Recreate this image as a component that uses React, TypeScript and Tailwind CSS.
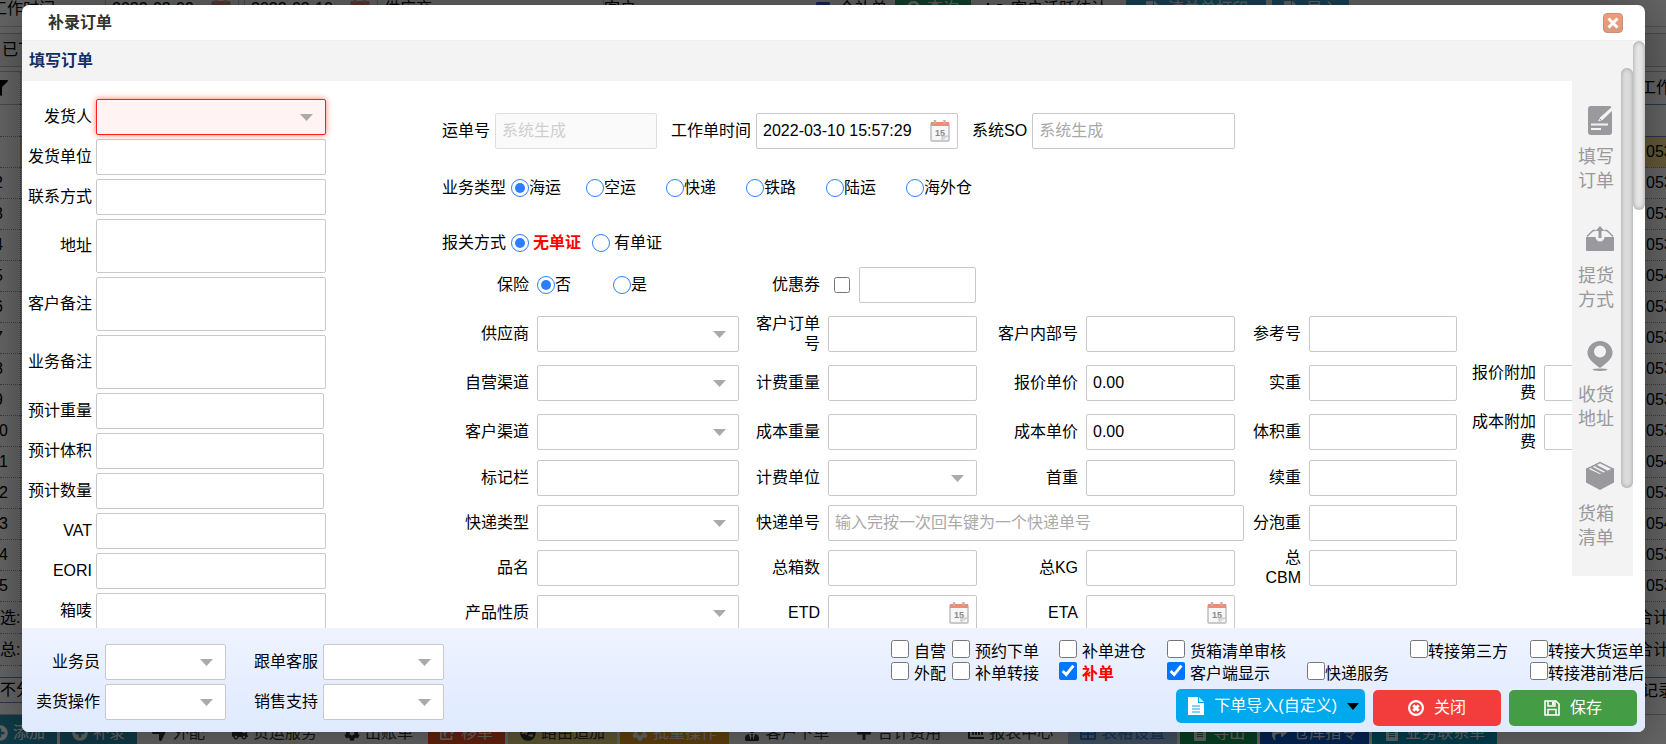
import { useId } from "react";
import type { ReactNode } from "react";
import {
  FaPlusCircle, FaLocationArrow, FaTruck, FaCog, FaShareSquare, FaGlobeAsia, FaUserTie, FaPlus,
  FaChartBar, FaTable, FaFileAlt, FaShare, FaFilter, FaSearch, FaCheckSquare, FaChartLine,
} from "react-icons/fa";

const frame = "w-full rounded-[2px] border px-[6px] text-base text-black outline-none placeholder:text-[#a9a9a9] ";
const box = frame + "border-[#c9c9c9] bg-white ";

function Calendar() {
  return (
    <svg viewBox="0 0 20 22" className="pointer-events-none absolute right-2 top-[7px] h-[22px] w-5" aria-hidden="true">
      <rect x="1" y="3" width="18" height="18" rx="1" fill="#f7f7f7" stroke="#b9b9b9" strokeWidth="1.4" />
      <rect x="1" y="2" width="18" height="4" fill="#f08a70" />
      <path d="M5 0v4M14.5 0v4" stroke="#b5b5b5" strokeWidth="2.4" />
      <text x="5" y="15.5" fontSize="9" fontWeight="700" fill="#8a8a8a" fontFamily="Liberation Sans, sans-serif">15</text>
      <path d="M12 21v-5h7" fill="#ddd" stroke="#c4c4c4" />
    </svg>
  );
}

function SelectBox({ id, invalid }: { id: string; invalid?: boolean }) {
  return (
    <div className="relative h-9 w-full">
      <select
        id={id}
        aria-invalid={invalid}
        className={(invalid ? frame + "border-[#ff1f1f] bg-[#fff3f3] shadow-[0_0_6px_#ff7a60] " : box) + "h-9 appearance-none"}
      >
        <option value=""></option>
      </select>
      <svg viewBox="0 0 13 7" className="pointer-events-none absolute right-[13px] top-[15px] h-[7px] w-[13px]" aria-hidden="true">
        <path d="M0 0h13L6.500 7z" fill="#aaa" />
      </svg>
    </div>
  );
}

type Kind = "text" | "select" | "date" | "area";

function Control({ id, kind, value, placeholder }: { id: string; kind: Kind; value?: string; placeholder?: string }) {
  if (kind === "select") return <SelectBox id={id} />;
  if (kind === "area") return <textarea id={id} className={box + "block h-[54px] resize-none"} />;
  if (kind === "date")
    return (
      <div className="relative h-9 w-full">
        <input id={id} type="text" defaultValue={value} className={box + "h-9"} />
        <Calendar />
      </div>
    );
  return <input id={id} type="text" defaultValue={value} placeholder={placeholder} className={box + "h-9"} />;
}

function SideField({ label, kind = "text", narrow, invalid }: { label: string; kind?: Kind; narrow?: boolean; invalid?: boolean }) {
  const id = useId();
  return (
    <div className="flex items-center gap-1">
      <label htmlFor={id} className="w-[70px] text-right">{label}</label>
      <div className={narrow ? "w-[228px]" : "w-[230px]"}>
        {invalid ? <SelectBox id={id} invalid /> : <Control id={id} kind={kind} />}
      </div>
    </div>
  );
}

function Cell({ label, kind = "text", value, placeholder, wide }: { label: string; kind?: Kind; value?: string; placeholder?: string; wide?: boolean }) {
  const id = useId();
  return (
    <>
      <label htmlFor={id} className="pl-[15px] text-right leading-5">{label}</label>
      <div className={wide ? "col-span-3 -mr-[9px] pl-2" : "pl-2"}>
        <Control id={id} kind={kind} value={value} placeholder={placeholder} />
      </div>
    </>
  );
}

function Radio({ name, label, checked, className = "", gap = "", strong }: { name: string; label: string; checked?: boolean; className?: string; gap?: string; strong?: boolean }) {
  return (
    <label className={"flex items-center " + gap + " " + className}>
      <input
        type="radio"
        name={name}
        defaultChecked={checked}
        className="grid size-[18px] shrink-0 appearance-none place-items-center rounded-full border border-[#2b7fff] bg-white before:size-[10px] before:rounded-full before:content-[''] checked:before:bg-[#2b7fff]"
      />
      <span className={strong ? "font-bold text-[#ff0000]" : ""}>{label}</span>
    </label>
  );
}

function Check({ label, checked, tight, strong }: { label: string; checked?: boolean; tight?: boolean; strong?: boolean }) {
  return (
    <label className={"flex h-[22px] items-start whitespace-nowrap " + (tight ? "" : "gap-[5px]")}>
      <input type="checkbox" defaultChecked={checked} className="size-[18px] shrink-0" />
      <span className={"leading-6 " + (strong ? "font-bold text-[#ff0000]" : "")}>{label}</span>
    </label>
  );
}

const grid = "grid auto-rows-[36px] grid-cols-[87px_210px_81px_157px_101px_157px_66px_156px_79px_157px] items-center ";

function OrderForm() {
  const no = useId();
  const time = useId();
  const so = useId();
  const coupon = useId();
  return (
    <div className="shrink-0">
      <div className="mt-8 flex h-9 items-center">
        <label htmlFor={no} className="mr-[5px]">运单号</label>
        <input id={no} disabled placeholder="系统生成" className="h-9 w-[162px] rounded-[2px] border border-[#dedede] bg-[#fafafa] px-[6px] placeholder:text-[#cfcfcf]" />
        <label htmlFor={time} className="ml-[14px] mr-[5px]">工作单时间</label>
        <div className="w-[202px]"><Control id={time} kind="date" value="2022-03-10 15:57:29" /></div>
        <label htmlFor={so} className="ml-[14px] mr-[5px]">系统SO</label>
        <div className="w-[203px]"><Control id={so} kind="text" placeholder="系统生成" /></div>
      </div>
      <div className="mt-[27px] flex h-6 items-center">
        <span className="mr-[5px]">业务类型</span>
        <Radio name="biz" label="海运" checked className="w-[75px]" />
        <Radio name="biz" label="空运" className="w-20" />
        <Radio name="biz" label="快递" className="w-20" />
        <Radio name="biz" label="铁路" className="w-20" />
        <Radio name="biz" label="陆运" className="w-20" />
        <Radio name="biz" label="海外仓" />
      </div>
      <div className="mt-[31px] flex h-6 items-center">
        <span className="mr-[5px]">报关方式</span>
        <Radio name="customs" label="无单证" checked strong gap="gap-1" className="w-[81px]" />
        <Radio name="customs" label="有单证" gap="gap-1" />
      </div>
      <div className={grid + "mt-3 gap-y-[13px]"}>
        <span className="text-right">保险</span>
        <div className="flex pl-2">
          <Radio name="ins" label="否" checked className="w-[76px]" />
          <Radio name="ins" label="是" />
        </div>
        <label htmlFor={coupon} className="text-right">优惠券</label>
        <div className="col-span-7 flex items-center gap-[9px] pl-[14px]">
          <input id={coupon} type="checkbox" className="size-4" />
          <input aria-label="优惠券" className="h-9 w-[117px] rounded-[2px] border border-[#c9c9c9] px-[6px]" />
        </div>

        <Cell label="供应商" kind="select" />
        <Cell label="客户订单号" />
        <Cell label="客户内部号" />
        <Cell label="参考号" />
        <span className="col-span-2" />

        <Cell label="自营渠道" kind="select" />
        <Cell label="计费重量" />
        <Cell label="报价单价" value="0.00" />
        <Cell label="实重" />
        <Cell label="报价附加费" />

        <Cell label="客户渠道" kind="select" />
        <Cell label="成本重量" />
        <Cell label="成本单价" value="0.00" />
        <Cell label="体积重" />
        <Cell label="成本附加费" />
      </div>
      <div className={grid + "mt-[10px] gap-y-[9px]"}>
        <Cell label="标记栏" />
        <Cell label="计费单位" kind="select" />
        <Cell label="首重" />
        <Cell label="续重" />
        <span className="col-span-2" />

        <Cell label="快递类型" kind="select" />
        <Cell label="快递单号" placeholder="输入完按一次回车键为一个快递单号" wide />
        <Cell label="分泡重" />
        <span className="col-span-2" />

        <Cell label="品名" />
        <Cell label="总箱数" />
        <Cell label="总KG" />
        <Cell label="总CBM" />
        <span className="col-span-2" />

        <Cell label="产品性质" kind="select" />
        <Cell label="ETD" kind="date" />
        <Cell label="ETA" kind="date" />
      </div>
    </div>
  );
}

function EditIcon() {
  return (
    <svg viewBox="0 0 28 30" className="h-[30px] w-7" aria-hidden="true">
      <rect x="2" y="1" width="24" height="29" rx="3" fill="#9a9a9e" />
      <path d="M28 0 L14 12.500 L12 16.500 L16.500 15 L28 4z" fill="#f3f3f3" />
      <path d="M13.500 13.500l1.800 1.800" stroke="#9a9a9e" strokeWidth="1" />
      <path d="M5 19.500h17M5 24h10" stroke="#f3f3f3" strokeWidth="2" />
    </svg>
  );
}
function UploadIcon() {
  return (
    <svg viewBox="0 0 28 30" className="h-[30px] w-7" aria-hidden="true">
      <path d="M0 13h9.500a4.500 4.500 0 0 0 9 0H28v13a1 1 0 0 1-1 1H1a1 1 0 0 1-1-1z" fill="#9a9a9e" />
      <path d="M1 12.500l6-6h2.500M27 12.500l-6-6h-2.500" fill="none" stroke="#9a9a9e" strokeWidth="1.400" />
      <path d="M14 2l4.500 5h-3v7h-3V7h-3z" fill="#9a9a9e" />
    </svg>
  );
}
function PinIcon() {
  return (
    <svg viewBox="0 2 28 30" className="h-[30px] w-7 overflow-visible" aria-hidden="true">
      <path fillRule="evenodd" d="M14 0a12.500 12 0 0 1 12.500 12c0 6-7 11-12.500 15C8.500 23 1.500 18 1.500 12A12.500 12 0 0 1 14 0zm0 4.500a6 6 0 1 0 0 12 6 6 0 0 0 0-12z" fill="#9a9a9e" />
      <ellipse cx="14" cy="28.700" rx="7.500" ry="1.200" fill="#9a9a9e" />
    </svg>
  );
}
function BoxIcon() {
  return (
    <svg viewBox="0 2 28 30" className="h-[30px] w-7 overflow-visible" aria-hidden="true">
      <path d="M0 8.500l14 6.500 14-6.500V22.500L14 30 0 22.500z" fill="#9a9a9e" />
      <path d="M1 9L14 2.500 27 9 14 15z" fill="#f3f3f3" stroke="#9a9a9e" strokeWidth="1.400" />
      <path d="M9.500 5.500l11.500 6M5.500 7.500l11.500 6" stroke="#9a9a9e" strokeWidth="2" />
    </svg>
  );
}

function StepItem({ icon, first, second }: { icon: ReactNode; first: string; second: string }) {
  return (
    <a href="#" className="flex w-9 flex-col items-end text-lg leading-6 text-[#999]">
      {icon}
      <span className="mt-[10px]">{first}</span>
      <span>{second}</span>
    </a>
  );
}

function FooterSelect({ label }: { label: string }) {
  const id = useId();
  return (
    <>
      <label htmlFor={id} className="text-right">{label}</label>
      <SelectBox id={id} />
    </>
  );
}

function Footer() {
  return (
    <div className="flex h-[104px] shrink-0 justify-between overflow-hidden bg-linear-to-b from-[#eef3ff] to-[#dfeafe]">
      <div className="grid auto-rows-[36px] grid-cols-[64px_121px_87px_121px] content-start items-center gap-x-[5px] gap-y-1 pl-[14px] pt-4">
        <FooterSelect label="业务员" />
        <FooterSelect label="跟单客服" />
        <FooterSelect label="卖货操作" />
        <FooterSelect label="销售支持" />
      </div>
      <div className="flex flex-col items-end pt-3">
        <div className="grid grid-cols-[61px_107px_108px_140px_103px_120px_115px]">
          <Check label="自营" />
          <Check label="预约下单" />
          <Check label="补单进仓" />
          <Check label="货箱清单审核" />
          <span />
          <Check label="转接第三方" tight />
          <Check label="转接大货运单" tight />
          <Check label="外配" />
          <Check label="补单转接" />
          <Check label="补单" checked strong />
          <Check label="客户端显示" checked />
          <Check label="快递服务" tight />
          <span />
          <Check label="转接港前港后" tight />
        </div>
        <div className="mt-[5px] flex gap-2 pr-2 text-white">
          <button className="flex h-[34px] items-center gap-[10px] rounded-[5px] bg-[#00a9ee] pl-3 pr-[6px]">
            <svg viewBox="0 0 16 18" className="h-[18px] w-4" aria-hidden="true">
              <path d="M0 0h10v6h6v12H0z" fill="#fff" />
              <path d="M11 0l5 5h-5z" fill="#cdeffd" />
              <path d="M4 9h8M4 12h8M4 15h8" stroke="#00a9ee" strokeWidth="1.200" />
            </svg>
            <span>下单导入(自定义)</span>
            <svg viewBox="0 0 12 7" className="h-[7px] w-3" aria-hidden="true"><path d="M0 0h12L6 7z" fill="#000" /></svg>
          </button>
          <button className="mt-px flex h-9 w-32 items-center justify-center gap-[10px] rounded-[5px] bg-[#f33d3d]">
            <svg viewBox="0 0 16 16" className="size-4" aria-hidden="true">
              <circle cx="8" cy="8" r="6.900" fill="none" stroke="#fff" strokeWidth="2.200" />
              <path d="M5.300 5.300l5.400 5.400M10.700 5.300l-5.400 5.400" stroke="#fff" strokeWidth="3" />
            </svg>
            <span>关闭</span>
          </button>
          <button className="mt-px flex h-9 w-32 items-center justify-center gap-[10px] rounded-[5px] bg-[#449c45]">
            <svg viewBox="0 0 16 16" className="size-4" aria-hidden="true">
              <path d="M1 1h11l3 3v11H1z" fill="none" stroke="#fff" strokeWidth="1.600" />
              <path d="M4 1v5h7V1M4 15V9.500h8V15" fill="none" stroke="#fff" strokeWidth="1.500" />
              <rect x="8" y="2" width="2" height="3" fill="#fff" />
            </svg>
            <span>保存</span>
          </button>
        </div>
      </div>
    </div>
  );
}

function Dialog() {
  return (
    <section role="dialog" aria-label="补录订单" className="relative flex min-w-0 flex-1 flex-col overflow-hidden rounded-[7px] bg-white">
      <header className="flex h-[36px] shrink-0 items-center justify-between border-b border-[#eee] pl-[26px] pr-[22px]">
        <h1 className="font-bold text-[#333]">补录订单</h1>
        <button aria-label="关闭窗口" className="flex size-5 items-center justify-center rounded-[4px] border border-[#cb8d76] bg-linear-to-b from-[#f59a78] to-[#d99a7c]">
          <svg viewBox="0 0 12 12" className="size-3 shrink-0" aria-hidden="true"><path d="M1.500 1.500l9 9M10.500 1.500l-9 9" stroke="#fff" strokeWidth="3" /></svg>
        </button>
      </header>
      <div className="flex min-h-0 flex-1">
        <div className="flex min-w-0 flex-1 flex-col">
          <h2 className="flex h-10 shrink-0 items-center bg-[#f3f3f3] pl-[7px] font-bold text-[#122e69]">填写订单</h2>
          <div className="flex min-h-0 flex-1">
            <form className="flex min-w-0 flex-1 overflow-hidden">
              <div className="mt-[18px] flex shrink-0 flex-col gap-1">
                <SideField label="发货人" invalid />
                <SideField label="发货单位" />
                <SideField label="联系方式" />
                <SideField label="地址" kind="area" />
                <SideField label="客户备注" kind="area" />
                <SideField label="业务备注" kind="area" />
                <SideField label="预计重量" narrow />
                <SideField label="预计体积" narrow />
                <SideField label="预计数量" narrow />
                <SideField label="VAT" />
                <SideField label="EORI" />
                <SideField label="箱唛" />
              </div>
              <div className="ml-[116px]"><OrderForm /></div>
            </form>
            <nav className="flex w-[61px] shrink-0 flex-col gap-[31px] self-start bg-[#f3f3f3] pb-[26px] pl-[6px] pt-6">
              <StepItem icon={<EditIcon />} first="填写" second="订单" />
              <StepItem icon={<UploadIcon />} first="提货" second="方式" />
              <StepItem icon={<PinIcon />} first="收货" second="地址" />
              <StepItem icon={<BoxIcon />} first="货箱" second="清单" />
            </nav>
          </div>
        </div>
        <div className="w-3 shrink-0 bg-white">
          <div className="h-[169px] rounded-full bg-[#e6e6e6] shadow-[inset_0_0_5px_#999]" />
        </div>
      </div>
      <div className="absolute right-3 top-[63px] h-[420px] w-3 rounded-full bg-[#dcdcdc] shadow-[inset_0_0_4px_#999]" />
      <Footer />
    </section>
  );
}

const tail = ["053", "053", "053", "053", "054", "053", "053", "053", "053", "053", "054", "053", "054", "053", "053"];

const actions: { text: string; icon: ReactNode; tone: string }[] = [
  { text: "添加", icon: <FaPlusCircle />, tone: "bg-[#2793b4] text-white" },
  { text: "补录", icon: <FaPlusCircle />, tone: "bg-[#2793b4] text-white" },
  { text: "外配", icon: <FaLocationArrow />, tone: "text-[#333]" },
  { text: "货运服务", icon: <FaTruck />, tone: "text-[#333]" },
  { text: "出账单", icon: <FaCog />, tone: "text-[#333]" },
  { text: "移单", icon: <FaShareSquare />, tone: "bg-[#ff5722] text-white" },
  { text: "路由追加", icon: <FaGlobeAsia />, tone: "bg-[#f0dc82] text-[#333]" },
  { text: "批量操作", icon: <FaCog />, tone: "bg-[#f5a623] text-white" },
  { text: "客户下单", icon: <FaUserTie />, tone: "text-[#333]" },
  { text: "合计费用", icon: <FaPlus />, tone: "text-[#333]" },
  { text: "报表中心", icon: <FaChartBar />, tone: "text-[#333]" },
  { text: "表格设置", icon: <FaTable />, tone: "bg-[#a9ccf5] text-[#2f7fe0]" },
  { text: "导出", icon: <FaFileAlt />, tone: "bg-[#15a05a] text-white" },
  { text: "仓库指令", icon: <FaShare />, tone: "bg-[#0a5fd8] text-white" },
  { text: "业务联系单", icon: <FaFileAlt />, tone: "bg-[#009fc8] text-white" },
];

function TopDate({ label, value }: { label: string; value: string }) {
  return (
    <div className="relative -mt-2 h-[34px] w-[134px] shrink-0">
      <input aria-label={label} defaultValue={value} className={box + "h-[34px]"} />
      <Calendar />
    </div>
  );
}

function Backdrop() {
  return (
    <div className="flex h-full flex-col overflow-hidden bg-white whitespace-nowrap">
      <div className="flex h-[27px] shrink-0 items-start border-b border-[#ccc] leading-[18px]">
        <span className="-ml-[9px] w-[114px] shrink-0">工作时间</span>
        <TopDate label="开始时间" value="2022-02-09" />
        <span className="w-[5px] shrink-0" />
        <TopDate label="结束时间" value="2022-03-10" />
        <span className="w-[226px] shrink-0 border-r border-[#ccc] pl-[6px]">供应商</span>
        <span className="w-[211px] shrink-0">客户</span>
        <span className="flex w-[80px] shrink-0 items-center gap-2"><FaCheckSquare className="text-[#2468d8]" />全补单</span>
        <span className="flex w-[76px] shrink-0 items-center justify-center gap-1 bg-[#2fa56a] text-white"><FaSearch />查询</span>
        <span className="flex w-[155px] shrink-0 items-center gap-2 pl-4"><FaChartLine />客户活跃统计</span>
        <span className="flex w-[140px] shrink-0 items-center justify-center gap-2 bg-[#3fa9d8] text-white"><FaFileAlt />清关单打印</span>
        <span className="ml-[6px] flex w-[77px] shrink-0 items-center justify-center gap-2 bg-[#3fa9d8] text-white"><FaFileAlt />导入</span>
      </div>
      <div className="mt-[6px] h-[34px] shrink-0 border-y border-[#bbb] bg-[#f4f4f4] pl-[2px] leading-8">已下单</div>
      <table className="mt-1 w-full shrink-0 border-collapse">
        <tbody>
          <tr className="h-[33px] border-y border-[#bbb]">
            <td className="w-[19px] overflow-hidden border-r border-dotted border-[#999] p-0"><FaFilter className="-ml-2" /></td>
            <td className="border-b border-[#5b8fd0] p-0"><span className="float-right w-[26px]">工作</span></td>
          </tr>
          <tr className="h-8 border-b border-dotted border-[#999]">
            <td className="border-r border-dotted border-[#999] p-0" />
            <td className="border-b border-[#5b8fd0] p-0" />
          </tr>
          {tail.map((t, i) => (
            <tr key={i} className={"h-[31px] border-b border-dotted border-[#999] " + (i === 0 ? "bg-[#ffe48c]" : "")}>
              <td className={"border-r border-dotted border-[#999] p-0 " + (i === 0 ? "bg-white" : "")}>
                <span className={"block w-4 " + (i > 8 ? "-ml-[1px]" : "-ml-[6px]")}>{i === 0 ? "" : i > 8 ? String(i + 1).slice(1) : i + 1}</span>
              </td>
              <td className="p-0"><span className="float-right w-[20px]">{t}</span></td>
            </tr>
          ))}
          {["选:", "总:"].map((t) => (
            <tr key={t} className="h-8 border-b border-dotted border-[#999] bg-[#fafafa]">
              <td className="p-0">{t}</td>
              <td className="p-0"><span className="float-right w-[29px]">合计</span></td>
            </tr>
          ))}
        </tbody>
      </table>
      <div className="mt-[11px] flex h-[26px] shrink-0 items-center justify-between border-t border-[#5b8fd0]">
        <span className="border-b border-[#5b8fd0]">不分页</span>
        <span className="w-[24px]">记录</span>
      </div>
      <div className="mt-[11px] flex h-9 shrink-0 border-t border-[#bbb]">
        <div className="-ml-5 flex gap-[3px]">
          {actions.map((a) => (
            <button key={a.text} className={"flex h-9 shrink-0 items-center gap-[5px] px-3 " + a.tone}>
              {a.icon}
              <span>{a.text}</span>
            </button>
          ))}
        </div>
      </div>
    </div>
  );
}

export default function App() {
  return (
    <main className="relative h-screen overflow-hidden text-base text-black [font-family:'Liberation_Sans','Noto_Sans_CJK_SC',sans-serif]">
      <Backdrop />
      <div className="absolute inset-0 flex bg-black/60 pb-3 pl-[22px] pr-[21px] pt-[5px]">
        <div className="flex min-w-0 flex-1 rounded-[7px] shadow-[1px_1px_50px_rgba(0,0,0,0.4)]">
          <Dialog />
        </div>
      </div>
    </main>
  );
}
